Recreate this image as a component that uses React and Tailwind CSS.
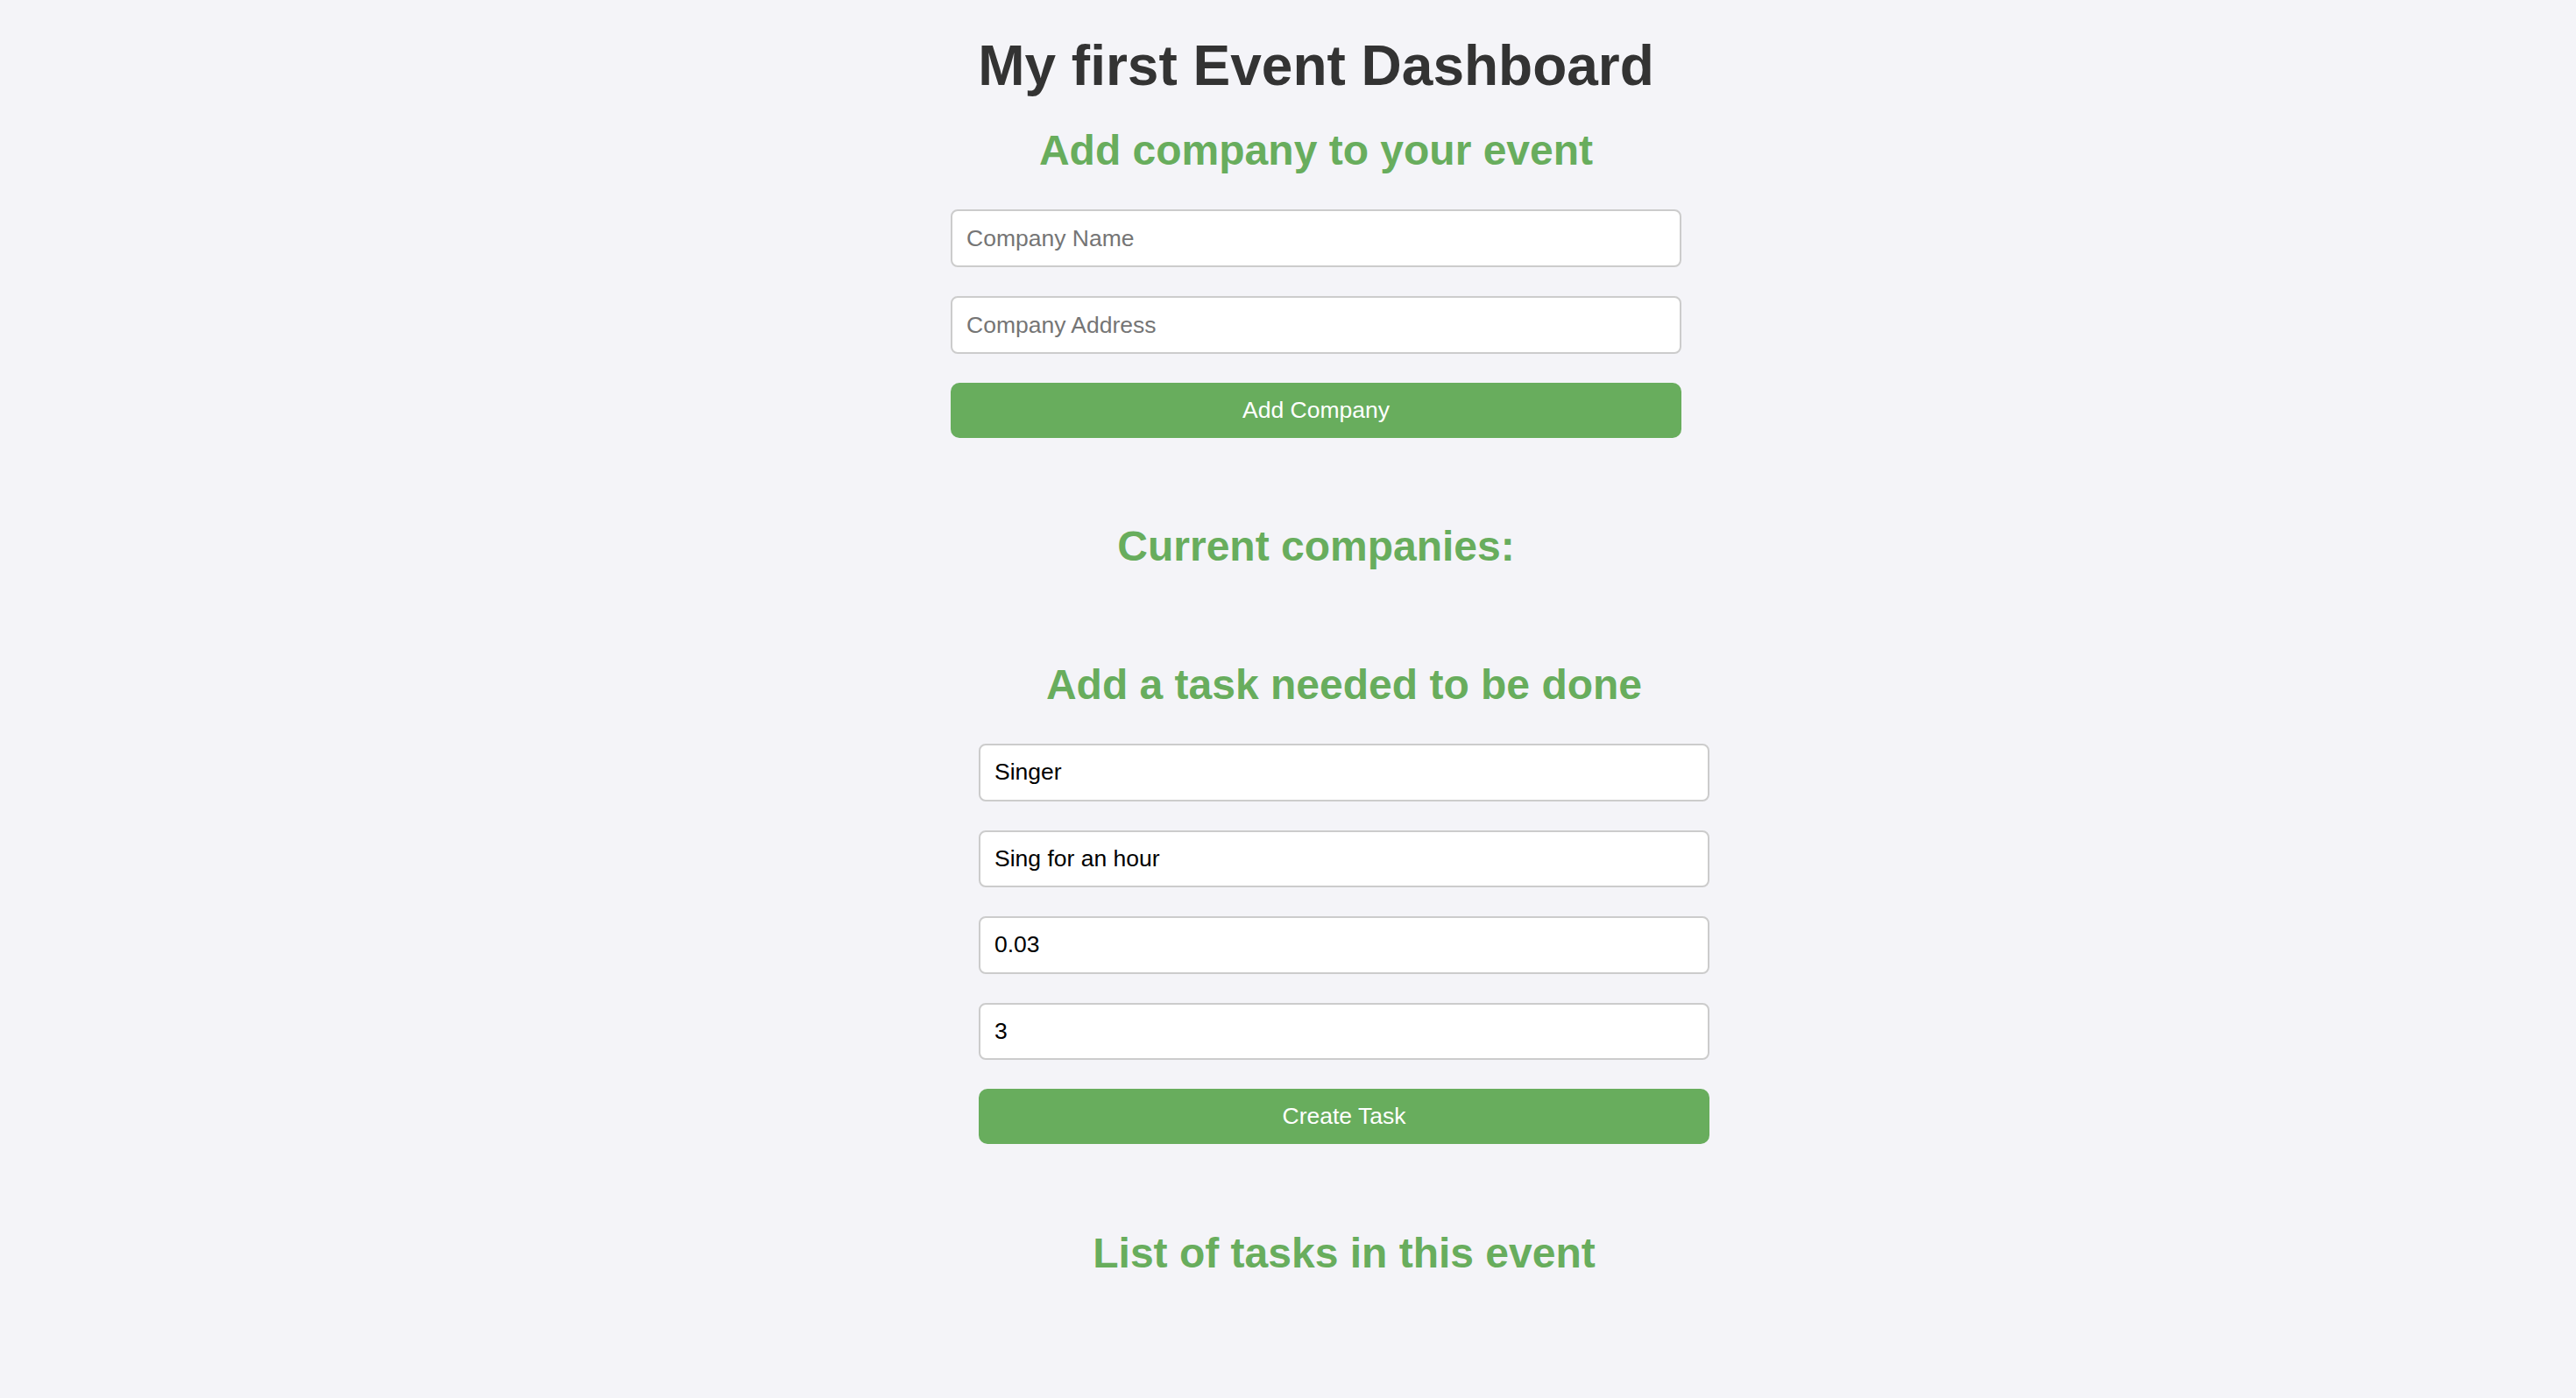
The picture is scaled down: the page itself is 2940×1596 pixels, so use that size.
import { useState } from 'react'

const inputCls =
  'w-[834px] rounded-[8px] border-2 border-[#cccccc] bg-white px-[16px] text-[26.5px] text-black placeholder:text-[#757575] outline-none'

const btnCls =
  'h-[63px] w-[834px] rounded-[10px] bg-[#68ad5d] text-[26.5px] text-white'

const headCls = 'text-[48px] leading-[54px] font-bold text-[#68ad5d]'

export default function App() {
  const [name, setName] = useState('')
  const [address, setAddress] = useState('')
  const [task, setTask] = useState({ title: 'Singer', desc: 'Sing for an hour', price: '0.03', people: '3' })

  return (
    <div className="min-h-screen bg-[#f4f4f8] pb-[130px] font-['Liberation_Sans',Arial,sans-serif]">
      {/* Companies */}
      <div className="flex flex-col items-center pl-[64px] pt-[39px]">
        <h1 className="text-[64px] leading-[72px] font-bold text-[#333333]">My first Event Dashboard</h1>
        <h2 className={`${headCls} mt-[34px]`}>Add company to your event</h2>
        <input
          className={`${inputCls} h-[66px] mt-[40px]`}
          placeholder="Company Name"
          value={name}
          onChange={(e) => setName(e.target.value)}
        />
        <input
          className={`${inputCls} h-[66px] mt-[33px]`}
          placeholder="Company Address"
          value={address}
          onChange={(e) => setAddress(e.target.value)}
        />
        <button className={`${btnCls} mt-[33px]`}>Add Company</button>
        <h2 className={`${headCls} mt-[97px]`}>Current companies:</h2>
      </div>

      {/* Tasks */}
      <div className="flex flex-col items-center pl-[128px] mt-[104px]">
        <h2 className={headCls}>Add a task needed to be done</h2>
        <input
          className={`${inputCls} h-[65.5px] mt-[40px]`}
          value={task.title}
          onChange={(e) => setTask({ ...task, title: e.target.value })}
        />
        <input
          className={`${inputCls} h-[65.5px] mt-[33px]`}
          value={task.desc}
          onChange={(e) => setTask({ ...task, desc: e.target.value })}
        />
        <input
          className={`${inputCls} h-[65.5px] mt-[33px]`}
          value={task.price}
          onChange={(e) => setTask({ ...task, price: e.target.value })}
        />
        <input
          className={`${inputCls} h-[65.5px] mt-[33px]`}
          value={task.people}
          onChange={(e) => setTask({ ...task, people: e.target.value })}
        />
        <button className={`${btnCls} mt-[33px]`}>Create Task</button>
        <h2 className={`${headCls} mt-[98px]`}>List of tasks in this event</h2>
      </div>
    </div>
  )
}
